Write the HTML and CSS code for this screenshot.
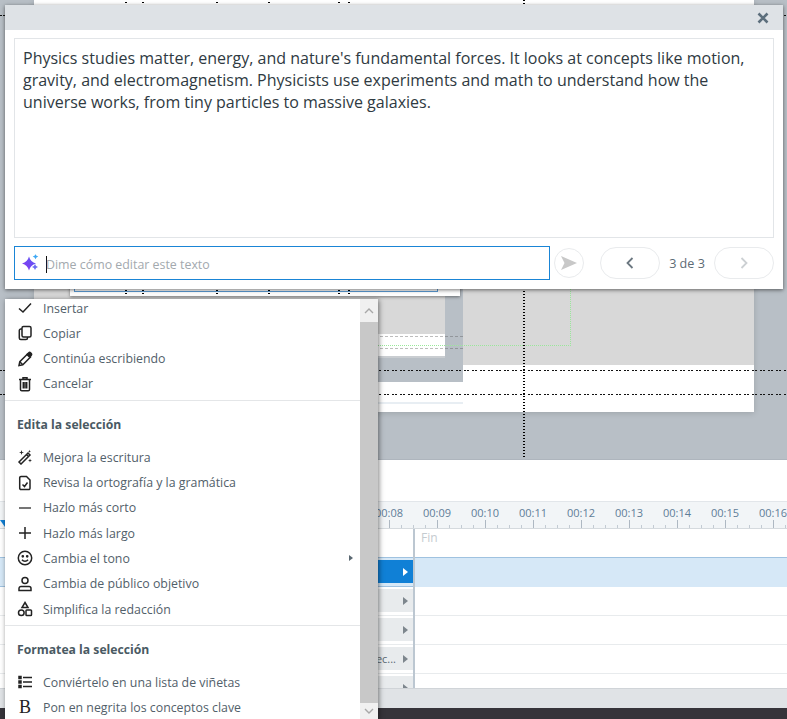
FILE: index.html
```html
<!DOCTYPE html>
<html lang="en">
<head>
    <meta charset="UTF-8">
    <title>Editor de texto con IA</title>
    <link rel="stylesheet" href="styles.css">
</head>
<body>
    <!-- Canvas behind the dialogs -->
    <div class="workspace">
        <div class="slide">
            <div class="slide-stage"></div>
            <div class="slide-foot"></div>
            <div class="inset"></div>
            <div class="inset-panel"></div>
            <div class="foot-line"></div>
            <div class="frame">
                <div class="frame-inner"></div>
                <i class="vguide v1"></i><i class="vguide v2"></i><i class="vguide v3"></i>
                <i class="vguide v4"></i><i class="vguide v5"></i><i class="vguide v6"></i>
            </div>
            <div class="dash d1"></div>
            <div class="dash d2"></div>
            <div class="green-guide"></div>
        </div>
        <i class="hguide h1"></i><i class="hguide h2"></i><i class="hguide h3"></i>
        <i class="vguide center"></i>
    </div>

    <!-- Timeline -->
    <div class="spacer"></div>
    <div class="ruler">
        <span>00:08</span><span>00:09</span><span>00:10</span><span>00:11</span><span>00:12</span>
        <span>00:13</span><span>00:14</span><span>00:15</span><span>00:16</span>
        <i class="playhead"></i>
    </div>
    <div class="tracks">
        <div class="track first"><div class="track-label"></div><div class="track-body">Fin</div></div>
        <div class="track active"><div class="track-label"><b class="arrow"></b></div><div class="track-body"></div></div>
        <div class="track"><div class="track-label"><b class="arrow"></b></div><div class="track-body"></div></div>
        <div class="track"><div class="track-label"><b class="arrow"></b></div><div class="track-body"></div></div>
        <div class="track"><div class="track-label">Objetivo de la selec...<b class="arrow"></b></div><div class="track-body"></div></div>
        <div class="track"><div class="track-label"><b class="arrow"></b></div><div class="track-body"></div></div>
    </div>
    <div class="status-bar"></div>
    <div class="dark-bar"></div>

    <!-- AI prompt dialog -->
    <div class="dialog">
        <div class="dialog-header">
            <svg class="close" viewBox="0 0 12 12"><path d="M1.5 1.5l9 9M10.5 1.5l-9 9"/></svg>
        </div>
        <div class="dialog-body">
            <div class="result">Physics studies matter, energy, and nature's fundamental forces. It looks at concepts like motion, gravity, and electromagnetism. Physicists use experiments and math to understand how the universe works, from tiny particles to massive galaxies.</div>
            <div class="prompt-row">
                <div class="prompt">
                    <svg class="sparkle" viewBox="0 0 18 18">
                        <defs><linearGradient id="spark" x1="0" y1="1" x2="1" y2="0"><stop offset="0" stop-color="#8a35f0"/><stop offset="1" stop-color="#5a5cf5"/></linearGradient></defs>
                        <path fill="url(#spark)" d="M8 2.500Q9.500 8 15 9.500 9.500 11 8 16.500 6.500 11 1 9.500 6.500 8 8 2.500z"/>
                        <path fill="#3fa9f5" d="M14.500 0Q15 2 17.300 2.600 15 3.200 14.500 5.200 14 3.200 11.700 2.600 14 2 14.500 0z"/>
                        <path fill="#6a6cf2" d="M14 10Q14.600 12.400 17 13 14.600 13.600 14 16 13.400 13.600 11 13 13.400 12.400 14 10z"/>
                    </svg>
                    <span class="placeholder">Dime cómo editar este texto</span>
                </div>
                <button class="send"><svg viewBox="0 0 18 18"><path d="M1 2l16 7-16 7 3.500-7z"/></svg></button>
                <button class="pill prev"><svg viewBox="0 0 10 14"><path d="M7.500 2L2.500 7l5 5"/></svg></button>
                <span class="pager">3 de 3</span>
                <button class="pill next"><svg viewBox="0 0 10 14"><path d="M2.500 2l5 5-5 5"/></svg></button>
            </div>
        </div>
    </div>

    <!-- Context menu -->
    <div class="menu">
        <div class="menu-list">
            <div class="item"><svg viewBox="0 0 16 16"><path d="M2 8.500L6 12l8-8.500"/></svg>Insertar</div>
            <div class="item"><svg viewBox="0 0 16 16"><rect x="5" y="1.500" width="9" height="10.500" rx="1.500"/><path d="M5 4H3.800A1.500 1.500 0 0 0 2.300 5.500v7.500a1.500 1.500 0 0 0 1.500 1.500h5.200a1.500 1.500 0 0 0 1.500-1.500V12"/></svg>Copiar</div>
            <div class="item"><svg viewBox="0 0 16 16"><path d="M2 14.500l.8-3.800 7.700-7.700 3 3-7.700 7.700zM2.800 10.700l3 3"/><path class="solid" d="M10 3.500l1.800-1.800a1.200 1.200 0 0 1 1.700 0l.8.800a1.200 1.200 0 0 1 0 1.700L12.500 6z"/></svg>Continúa escribiendo</div>
            <div class="item"><svg viewBox="0 0 16 16"><path d="M2 3.500h12M6 3.500V1.800h4v1.700M3.500 3.500v10a1.300 1.300 0 0 0 1.300 1.300h6.400a1.300 1.300 0 0 0 1.300-1.300v-10M6.300 6v6.500M8 6v6.500M9.700 6v6.500"/></svg>Cancelar</div>
            <div class="sep"></div>
            <div class="menu-heading">Edita la selección</div>
            <div class="item"><svg viewBox="0 0 16 16"><path d="M2 13l9-9 2 2-9 9zM9.500 5.500l2 2"/><path class="solid thin" d="M4.500 1l.6 1.900L7 3.500l-1.900.6L4.500 6l-.6-1.900L2 3.500l1.900-.6zM13 9.500l.5 1.500 1.500.5-1.500.5-.5 1.500-.5-1.500-1.500-.5 1.500-.5zM12.500 .8l.4 1.100 1.100.4-1.100.4-.4 1.100-.4-1.100-1.100-.4 1.100-.4z"/></svg>Mejora la escritura</div>
            <div class="item"><svg viewBox="0 0 16 16"><path d="M4 1.500h5.500L13 5v8.200a1.300 1.300 0 0 1-1.300 1.300H4a1.300 1.300 0 0 1-1.300-1.300V2.800A1.300 1.300 0 0 1 4 1.500zM5.500 9.500l2 2 3-4"/></svg>Revisa la ortografía y la gramática</div>
            <div class="item"><svg class="soft" viewBox="0 0 16 16"><path d="M2 8h12"/></svg>Hazlo más corto</div>
            <div class="item"><svg viewBox="0 0 16 16"><path d="M2 8h12M8 2v12"/></svg>Hazlo más largo</div>
            <div class="item"><svg viewBox="0 0 16 16"><circle cx="8" cy="8" r="6.700"/><circle class="solid" cx="5.800" cy="6.300" r=".6"/><circle class="solid" cx="10.200" cy="6.300" r=".6"/><path d="M5 9.800c1.500 2 4.500 2 6 0"/></svg>Cambia el tono<b class="sub-arrow"></b></div>
            <div class="item"><svg viewBox="0 0 16 16"><circle cx="8" cy="4.500" r="3"/><path d="M4 10.500h8a2 2 0 0 1 2 2v2H2v-2a2 2 0 0 1 2-2z"/></svg>Cambia de público objetivo</div>
            <div class="item"><svg viewBox="0 0 16 16"><path d="M8 1.500l3 5H5z"/><circle cx="4.300" cy="11.800" r="2.800"/><rect x="9" y="9" width="5.500" height="5.500" rx=".8"/></svg>Simplifica la redacción</div>
            <div class="sep"></div>
            <div class="menu-heading">Formatea la selección</div>
            <div class="item"><svg viewBox="0 0 16 16"><path d="M6 3.500h9M6 8h9M6 12.500h9"/><path class="solid" d="M2 2.500h2v2H2zM2 7h2v2H2zM2 11.500h2v2H2z"/></svg>Conviértelo en una lista de viñetas</div>
            <div class="item"><span class="bold-glyph">B</span>Pon en negrita los conceptos clave</div>
        </div>
        <div class="scrollbar">
            <div class="scroll-btn"><svg viewBox="0 0 10 6"><path d="M1 5l4-4 4 4"/></svg></div>
            <div class="scroll-track"></div>
            <div class="scroll-btn bottom"><svg viewBox="0 0 10 6"><path d="M1 1l4 4 4-4"/></svg></div>
        </div>
    </div>
</body>
</html>
```

FILE: styles.css
```css
/* General Styles */
* {
    box-sizing: border-box;
}

html, body {
    margin: 0;
    height: 719px;
    overflow: hidden;
}

body {
    position: relative;
    display: flex;
    flex-direction: column;
    font-family: "Open Sans", "Liberation Sans", sans-serif;
    background: #fff;
}

/* Canvas */
.workspace {
    position: relative;
    flex: none;
    height: 460px;
    overflow: hidden;
    background: #b8bfc6;
    border-bottom: 1px solid #aeb5bd;
}

.slide {
    position: absolute;
    left: 34px;
    top: 0;
    width: 720px;
    box-shadow: 0 1px 6px rgba(0, 0, 0, .15);
}

.slide-stage {
    height: 365px;
    background: linear-gradient(#fff 10px, #d8d8d8 10px);
}

.slide-foot {
    height: 47px;
    background: #fff;
}

.inset {
    position: absolute;
    left: 26px;
    top: 10px;
    width: 403px;
    height: 372px;
    background: #b8bfc6;
}

.inset-panel {
    position: absolute;
    left: 26px;
    top: 10px;
    width: 385px;
    height: 348px;
    background: linear-gradient(#d8d8d8 324px, #fff 324px);
    border-bottom: 2px solid #c9cdd1;
}

.foot-line {
    position: absolute;
    left: 26px;
    top: 402px;
    width: 403px;
    height: 2px;
    background: #e8eef3;
}

.frame {
    position: absolute;
    left: 36px;
    top: 10px;
    width: 390px;
    height: 286px;
    background: #fff;
    box-shadow: 0 1px 3px rgba(0, 0, 0, .45);
}

.frame-inner {
    position: absolute;
    left: 4px;
    top: 0;
    width: 364px;
    height: 282px;
    border: 1px solid #5b9bd5;
}

.dash {
    position: absolute;
    left: 26px;
    width: 403px;
    border-top: 1px dashed rgba(90, 90, 90, .4);
}

.d1 { top: 336px; }
.d2 { top: 348px; }

.green-guide {
    position: absolute;
    left: 100px;
    top: 10px;
    width: 437px;
    height: 336px;
    border-right: 1px dotted #9ae89a;
    border-bottom: 1px dotted #9ae89a;
}

.vguide {
    position: absolute;
    top: -8px;
    width: 2px;
    height: 294px;
    background: repeating-linear-gradient(#000 0 1px, transparent 1px 3px);
}

.v1 { left: 55px; }
.v2 { left: 72px; }
.v3 { left: 146px; }
.v4 { left: 198px; }
.v5 { left: 268px; }
.v6 { left: 278px; }

.vguide.center {
    top: 0;
    left: 523px;
    height: 460px;
}

.hguide {
    position: absolute;
    left: 0;
    right: 0;
    height: 1px;
    background: repeating-linear-gradient(90deg, #111 0 2px, transparent 2px 3px, #111 3px 5px, transparent 5px 8px);
}

.h1 { top: 15px; }
.h2 { top: 370px; }
.h3 { top: 394px; }

/* Timeline */
.spacer {
    flex: none;
    height: 41px;
}

.ruler {
    position: relative;
    flex: none;
    display: flex;
    height: 28px;
    padding-left: 365px;
    overflow: hidden;
    font-size: 11px;
    color: #5f7d98;
    background-color: #f2f5f7;
    background-image:
        repeating-linear-gradient(90deg, #aeb8c2 0 1px, transparent 1px 48px),
        repeating-linear-gradient(90deg, #c3cbd3 0 1px, transparent 1px 12px);
    background-position: 5px 18px, 5px 23px;
    background-size: 100% 9px, 100% 4px;
    background-repeat: no-repeat;
    border-top: 1px solid #e2e6ea;
    border-bottom: 1px solid #d5dade;
}

.ruler span {
    flex: none;
    width: 48px;
    padding-top: 3px;
    text-align: center;
}

.playhead {
    position: absolute;
    left: 0;
    top: 18px;
    width: 5px;
    height: 7px;
    background: #1080d6;
    clip-path: polygon(0 0, 100% 0, 100% 100%);
}

.tracks {
    flex: none;
    height: 159px;
    overflow: hidden;
}

.track {
    display: flex;
    height: 29px;
    border-bottom: 1px solid #e8ebed;
}

.track.first {
    height: 28px;
    border-bottom: none;
}

.track-label {
    display: flex;
    align-items: center;
    justify-content: flex-end;
    width: 405px;
    margin: 2px 0 3px 8px;
    padding-right: 5px;
    font-size: 11px;
    white-space: nowrap;
    color: #5a6872;
    background: #e8ebed;
}

.first .track-label {
    background: none;
}

.track-body {
    flex: 1;
    padding: 0 0 0 6px;
    font-size: 12px;
    line-height: 17px;
    color: #c5cbd0;
    border-left: 2px solid #bcc7d1;
    margin-bottom: -1px;
}

.track.active {
    height: 30px;
    background: #d6e8f7;
    border-top: 1px solid #9fc2e0;
    border-bottom: 1px solid #9fc2e0;
}

.active .track-label {
    background: #1080d6;
}

.active .track-body {
    background: #d6e8f7;
}

.arrow {
    width: 0;
    height: 0;
    margin-left: 7px;
    border-left: 5px solid #7d868d;
    border-top: 4px solid transparent;
    border-bottom: 4px solid transparent;
}

.active .arrow {
    border-left-color: #fff;
}

.status-bar {
    flex: none;
    height: 20px;
    background: #e0e3e6;
    border-top: 1px solid #d0d4d8;
}

.dark-bar {
    flex: 1;
    background: #36343a;
}

/* AI prompt dialog */
.dialog {
    position: absolute;
    left: 5px;
    top: 5px;
    width: 778px;
    height: 284px;
    background: #fff;
    box-shadow: 0 1px 4px rgba(0, 0, 0, .55);
}

.dialog-header {
    display: flex;
    align-items: center;
    justify-content: flex-end;
    height: 25px;
    padding-right: 14px;
    background: #dee2e6;
}

.close {
    width: 12px;
    height: 12px;
    fill: none;
    stroke: #5c6e7c;
    stroke-width: 2.6;
}

.dialog-body {
    padding: 8px 9px;
}

.result {
    height: 200px;
    padding: 8px;
    font-size: 16px;
    line-height: 22px;
    color: #2f3a42;
    border: 1px solid #e2e5e8;
}

.prompt-row {
    display: flex;
    align-items: center;
    height: 34px;
    margin-top: 8px;
}

.prompt {
    display: flex;
    align-items: center;
    width: 536px;
    height: 34px;
    padding-left: 6px;
    border: 1px solid #1a85d6;
}

.sparkle {
    flex: none;
    width: 18px;
    height: 18px;
    margin-right: 7px;
}

.placeholder {
    margin-top: 2px;
    font-size: 12.4px;
    line-height: 17px;
    color: #a3a9ae;
    border-left: 1px solid #111;
    text-indent: -1px;
}

button {
    display: flex;
    align-items: center;
    justify-content: center;
    padding: 0;
    background: #fff;
    border: 1px solid #e9ebed;
}

.send {
    width: 30px;
    height: 30px;
    margin-left: 4px;
    border-radius: 50%;
}

.send svg {
    width: 18px;
    height: 18px;
    fill: #c8c8c8;
}

.pill {
    width: 60px;
    height: 32px;
    border-radius: 16px;
}

.pill svg {
    width: 10px;
    height: 14px;
    fill: none;
    stroke-width: 1.8;
}

.prev {
    margin-left: 16px;
}

.prev svg {
    stroke: #6b7780;
}

.next svg {
    stroke: #ccd0d3;
}

.pager {
    width: 54px;
    font-size: 12.6px;
    text-align: center;
    color: #5d6b75;
}

/* Context menu */
.menu {
    position: absolute;
    left: 5px;
    top: 299px;
    display: flex;
    width: 373px;
    height: 420px;
    background: #fff;
    box-shadow: 1px 1px 5px rgba(0, 0, 0, .5);
}

.menu-list {
    flex: 1;
    height: 420px;
    overflow: hidden;
    font-size: 12.35px;
    color: #52606a;
}

.item {
    position: relative;
    display: flex;
    align-items: center;
    height: 25.3px;
    padding-left: 12px;
}

.item:first-child {
    margin-top: -3.6px;
}

.item svg {
    flex: none;
    width: 16px;
    height: 16px;
    margin-right: 10px;
    fill: none;
    stroke: #222;
    stroke-width: 1.5;
}

.item svg.soft {
    stroke: #666;
    stroke-width: 1.8;
}

.item svg .solid {
    fill: #222;
}

.item svg .thin {
    stroke: none;
}

.bold-glyph {
    flex: none;
    width: 16px;
    margin-right: 10px;
    font-family: "Liberation Serif", serif;
    font-size: 18px;
    text-align: center;
    color: #222;
}

.sub-arrow {
    position: absolute;
    left: 344px;
    width: 0;
    height: 0;
    border-left: 4px solid #5a6872;
    border-top: 3px solid transparent;
    border-bottom: 3px solid transparent;
}

.sep {
    height: 1px;
    margin-top: 3px;
    background: #e4e6e8;
}

.menu-heading {
    display: flex;
    align-items: center;
    height: 41px;
    padding-left: 12px;
    margin-top: 3px;
    font-size: 12.2px;
    font-weight: 700;
    color: #4a5a63;
}

.scrollbar {
    display: flex;
    flex-direction: column;
    flex: none;
    width: 18px;
}

.scroll-btn {
    display: flex;
    align-items: center;
    justify-content: center;
    height: 23px;
    background: #f0f0f0;
}

.scroll-btn.bottom {
    height: 16px;
}

.scroll-btn svg {
    width: 10px;
    height: 6px;
    fill: none;
    stroke: #a8a8a8;
    stroke-width: 1.4;
}

.scroll-track {
    flex: 1;
    background: #c8c8c8;
}
```
